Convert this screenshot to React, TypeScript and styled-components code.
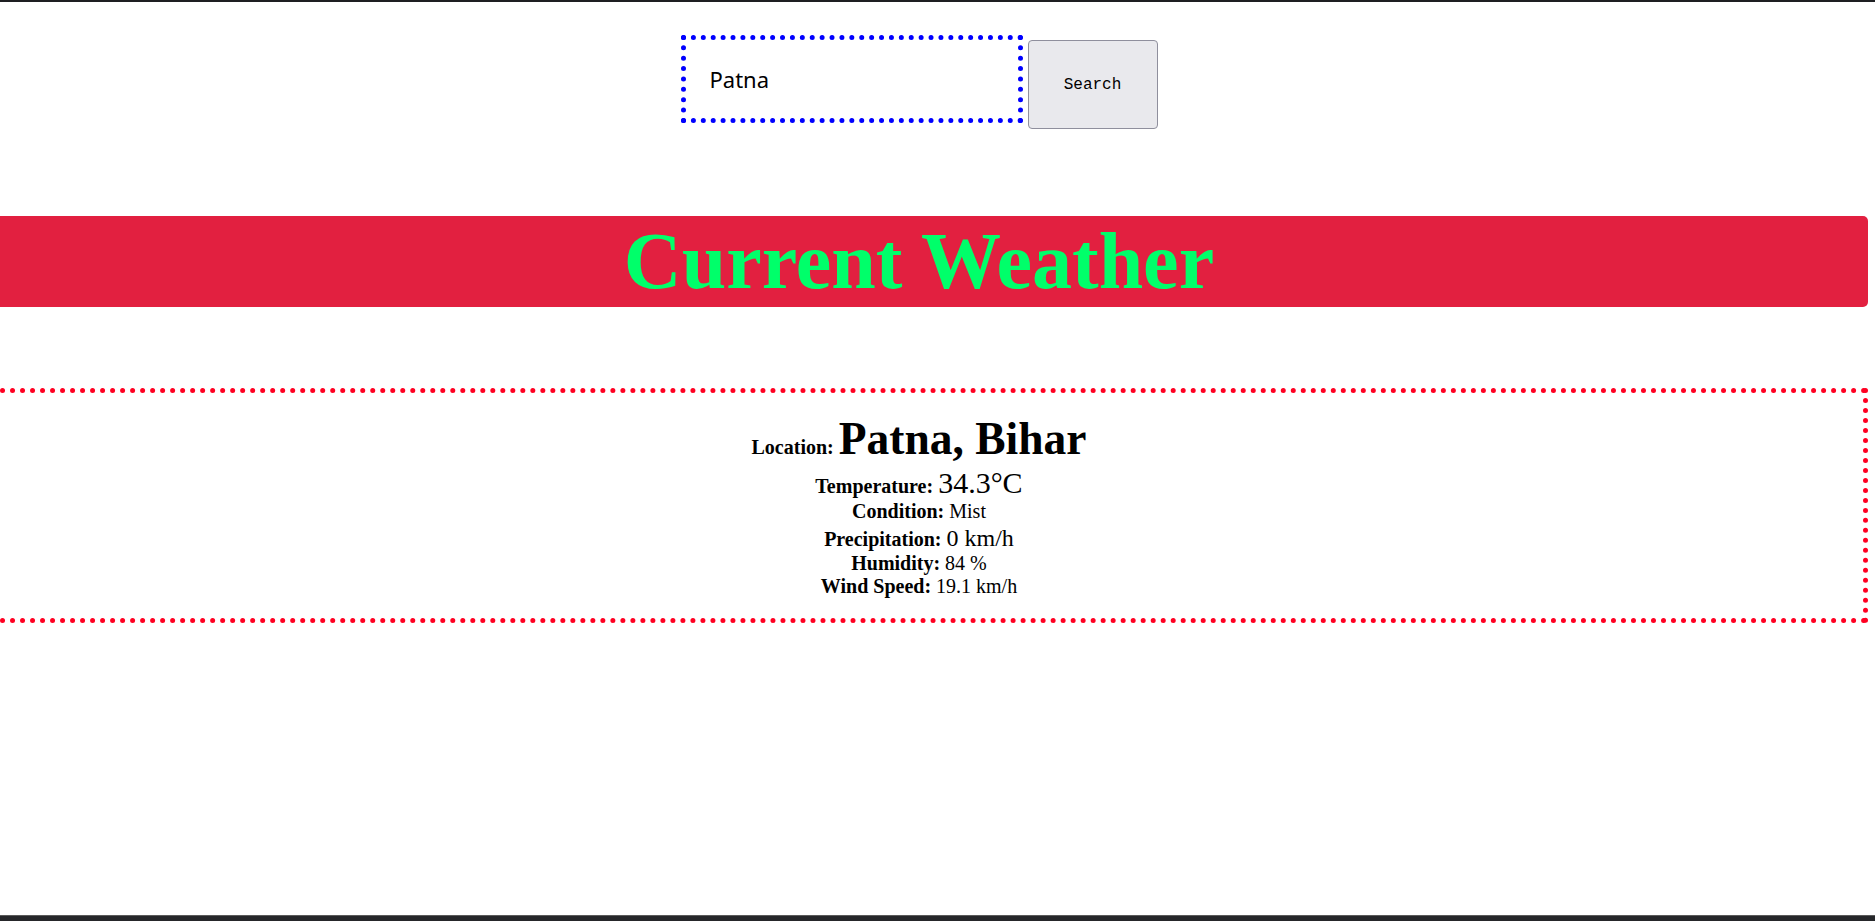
import React from "react";
import styled, { createGlobalStyle } from "styled-components";

const GlobalStyle = createGlobalStyle`
  html, body {
    margin: 0;
    padding: 0;
    background: #ffffff;
    overflow: hidden;
  }
  body {
    font-family: "Liberation Serif", "Times New Roman", serif;
    font-size: 20px;
    color: #000;
  }
`;

const Frame = styled.div`
  box-sizing: border-box;
  min-height: 100vh;
  border-top: 2px solid #1e1f22;
  border-bottom: 5px solid #26272a;
  box-shadow: inset 0 -6px 0 -5px #5a5a5a;
  background: #fff;
`;

const Page = styled.div`
  width: 1898px;
  margin-left: -30px;
`;

const SearchRow = styled.form`
  display: flex;
  justify-content: center;
  align-items: flex-start;
  padding-top: 33px;
  margin: 0;
`;

const SearchInput = styled.input`
  box-sizing: border-box;
  width: 342px;
  height: 88px;
  border: 5px dotted #0000ff;
  outline: none;
  padding: 0 24px;
  font-family: "Noto Sans", "Open Sans", sans-serif;
  font-size: 22px;
  color: #000;
  background: #fff;
`;

const SearchButton = styled.button`
  box-sizing: border-box;
  width: 130px;
  height: 89px;
  margin-left: 5px;
  margin-top: 5px;
  background: #e9e9ed;
  border: 1px solid #8f8f9d;
  border-radius: 4px;
  font-family: "Liberation Mono", "Courier New", monospace;
  font-size: 16px;
  color: #000;
  padding: 0;
`;

const Banner = styled.div`
  margin-top: 87px;
  height: 91px;
  background: #e22040;
  border-radius: 5px;
  display: flex;
  justify-content: center;
`;

const Title = styled.h1`
  margin: 0;
  font-family: "Liberation Serif", "Times New Roman", serif;
  font-size: 80px;
  font-weight: bold;
  line-height: 91px;
  color: #00ff6a;
`;

const InfoBox = styled.section`
  margin-top: 81px;
  border: 5px dotted #ff0022;
  padding: 19px 0 19px;
  text-align: center;
`;

const Line = styled.div`
  margin: 0;
  line-height: 1.17;
`;

const Label = styled.b`
  font-size: 20px;
  font-weight: bold;
`;

const Value = styled.span<{ $size: number; $bold?: boolean }>`
  font-size: ${(p) => p.$size}px;
  font-weight: ${(p) => (p.$bold ? "bold" : "normal")};
`;

const rows: { label: string; value: string; size: number; bold?: boolean }[] = [
  { label: "Location:", value: "Patna, Bihar", size: 45.5, bold: true },
  { label: "Temperature:", value: "34.3°C", size: 30 },
  { label: "Condition:", value: "Mist", size: 20 },
  { label: "Precipitation:", value: "0 km/h", size: 24 },
  { label: "Humidity:", value: "84 %", size: 20 },
  { label: "Wind Speed:", value: "19.1 km/h", size: 20 },
];

export default function App() {
  return (
    <>
      <GlobalStyle />
      <Frame>
        <Page>
          <SearchRow onSubmit={(e) => e.preventDefault()}>
            <SearchInput type="text" defaultValue="Patna" />
            <SearchButton type="submit">Search</SearchButton>
          </SearchRow>
          <Banner>
            <Title>Current Weather</Title>
          </Banner>
          <InfoBox>
            {rows.map((r) => (
              <Line key={r.label}>
                <Label>{r.label}</Label>{" "}
                <Value $size={r.size} $bold={r.bold}>
                  {r.value}
                </Value>
              </Line>
            ))}
          </InfoBox>
        </Page>
      </Frame>
    </>
  );
}
